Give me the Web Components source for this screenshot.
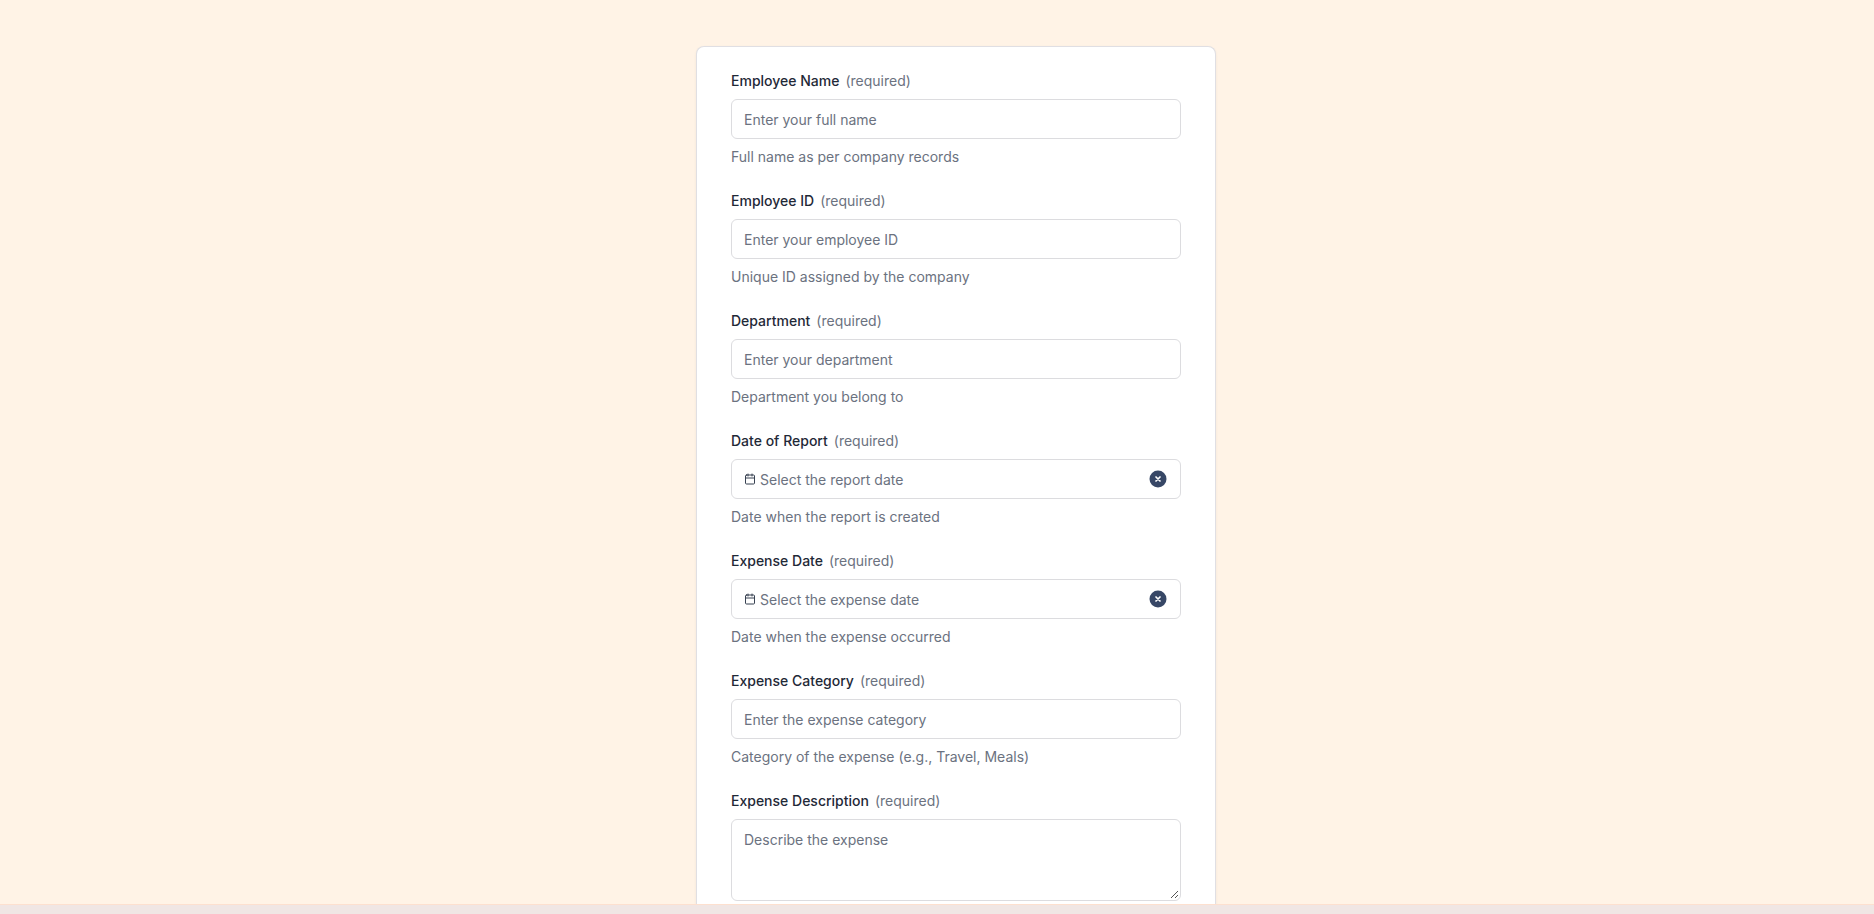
<!DOCTYPE html>
<html><head><meta charset="utf-8">
<style>
html,body{margin:0;height:914px;overflow:hidden;background:#fff3e6;font-family:Inter,"Liberation Sans",sans-serif}
body{display:flex;flex-direction:column}
</style></head><body>
<form-page>
<form-field label="Employee Name" placeholder="Enter your full name" help="Full name as per company records"></form-field>
<form-field label="Employee ID" placeholder="Enter your employee ID" help="Unique ID assigned by the company"></form-field>
<form-field label="Department" placeholder="Enter your department" help="Department you belong to"></form-field>
<form-field type="date" label="Date of Report" placeholder="Select the report date" help="Date when the report is created"></form-field>
<form-field type="date" label="Expense Date" placeholder="Select the expense date" help="Date when the expense occurred"></form-field>
<form-field label="Expense Category" placeholder="Enter the expense category" help="Category of the expense (e.g., Travel, Meals)"></form-field>
<form-field type="area" label="Expense Description" placeholder="Describe the expense"></form-field>
</form-page>
<foot-bar></foot-bar>
<script>
class FormPage extends HTMLElement{constructor(){super();this.attachShadow({mode:'open'}).innerHTML=`<style>
:host{display:flex;flex-direction:column;align-items:center;flex:1;min-height:0;overflow:hidden;padding:46px 0 0 38px}
.card{box-sizing:border-box;width:520px;background:#fff;border:1px solid #e0dfe3;border-bottom:0;border-radius:8px 8px 0 0;padding:24px 34px 0;display:flex;flex-direction:column;flex:none;box-shadow:0 1px 3px rgba(0,0,0,.06)}
</style><div class="card"><slot></slot></div>`}}
customElements.define('form-page',FormPage);
class FormField extends HTMLElement{constructor(){super();this.attachShadow({mode:'open'})}
connectedCallback(){const t=this.getAttribute('type')||'text',l=this.getAttribute('label'),p=this.getAttribute('placeholder'),h=this.getAttribute('help');
const cal=`<svg width="12" height="12" viewBox="0 0 24 24" fill="none" stroke="#374151" stroke-width="2" stroke-linecap="round" stroke-linejoin="round"><rect x="3" y="4" width="18" height="18" rx="2"/><path d="M8 2v4M16 2v4M3 10h18"/></svg>`;
const clr=`<svg width="18" height="18" viewBox="0 0 18 18"><circle cx="9" cy="9" r="8.5" fill="#374766"/><path d="M7 7l4 4M11 7l-4 4" stroke="#fff" stroke-width="1.7" stroke-linecap="round"/></svg>`;
let ctl;
if(t==='date')ctl=`<div class="box date">${cal}<span class="ph">${p}</span><span class="x">${clr}</span></div>`;
else if(t==='area')ctl=`<div class="box area"><span class="ph">${p}</span><svg class="grip" width="9" height="9" viewBox="0 0 9 9"><path d="M1 8L8 1M5 8L8 5" stroke="#555" stroke-width="1"/></svg></div>`;
else ctl=`<div class="box"><span class="ph">${p}</span></div>`;
this.shadowRoot.innerHTML=`<style>
:host{display:block;margin-bottom:24px}
.lab{display:flex;gap:6px;font-size:14px;line-height:20px;margin-bottom:8px}
.lab b{font-weight:500;color:#1f2937}.lab span{color:#6b7280}
.box{box-sizing:border-box;height:40px;border:1px solid #dcdcdf;border-radius:6px;background:#fff;display:flex;align-items:center;padding:0 12px;font-size:14px;position:relative}
.ph{color:#6b7280}
.date{gap:4px}.x{margin-left:auto;display:flex;margin-right:1px}
.area{height:82px;align-items:flex-start;padding-top:11px}
.grip{position:absolute;right:1px;bottom:1px}
.help{font-size:14px;line-height:20px;color:#6b7280;margin-top:8px}
</style><div class="lab"><b>${l}</b><span>(required)</span></div>${ctl}${h?`<div class="help">${h}</div>`:''}`}}
customElements.define('form-field',FormField);
class FootBar extends HTMLElement{constructor(){super();this.attachShadow({mode:'open'}).innerHTML=`<style>
:host{display:block;flex:none;height:10px;box-sizing:border-box;background:#f0e6e4;border-top:1px solid #fde0cf;overflow:hidden}
</style>`}}
customElements.define('foot-bar',FootBar);
</script>
</body></html>
